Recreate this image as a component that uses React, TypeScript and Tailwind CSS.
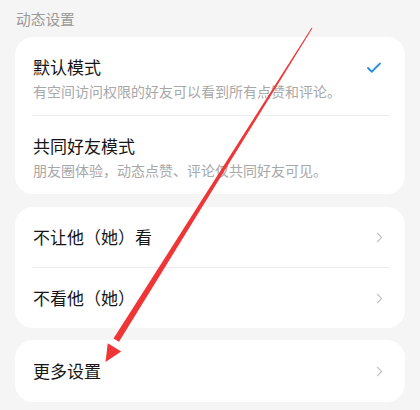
import { Check, ChevronRight } from 'lucide-react';

const font = { fontFamily: '"Noto Sans CJK SC", "Noto Sans", sans-serif' };

const ModeRow = ({ title, desc, checked }: { title: string; desc: string; checked?: boolean }) => (
  <div className="flex items-center pl-[18px] pr-[22px] pt-[18px] pb-[14px]">
    <div className="flex-1">
      <div className="text-[17px] leading-[24px] text-[#161616]">{title}</div>
      <div className="mt-[2px] text-[14px] leading-[20px] text-[#a8a8a8]">{desc}</div>
    </div>
    {checked && <Check className="h-[18px] w-[18px] text-[#2a8ee0] -mt-[20px]" strokeWidth={2.4} />}
  </div>
);

const LinkRow = ({ label, height }: { label: string; height: string }) => (
  <div className={`flex items-center pl-[18px] pr-[17px] ${height}`}>
    <span className="flex-1 text-[17px] leading-[24px] text-[#161616]">{label}</span>
    <ChevronRight className="h-[17px] w-[17px] text-[#c4c4c4]" strokeWidth={1.6} />
  </div>
);

const Divider = () => <div className="ml-[18px] mr-[15px] h-px bg-[#ededed]" />;

export default function App() {
  return (
    <div className="relative h-[410px] w-[420px] overflow-hidden bg-[#f5f5f5] px-[15px] pt-[9px]" style={font}>
      <div className="pl-px text-[14.7px] leading-[20px] text-[#9a9a9a]">动态设置</div>

      <div className="mt-[8px] rounded-[18px] bg-white">
        <ModeRow title="默认模式" desc="有空间访问权限的好友可以看到所有点赞和评论。" checked />
        <Divider />
        <ModeRow title="共同好友模式" desc="朋友圈体验，动态点赞、评论仅共同好友可见。" />
      </div>

      <div className="mt-[13px] rounded-[18px] bg-white">
        <LinkRow label="不让他（她）看" height="h-[60px]" />
        <Divider />
        <LinkRow label="不看他（她）" height="h-[60px]" />
      </div>

      <div className="mt-[12px] rounded-[18px] bg-white">
        <LinkRow label="更多设置" height="h-[62px]" />
      </div>

      {/* red annotation arrow */}
      <svg className="pointer-events-none absolute left-0 top-0" width="420" height="410" viewBox="0 0 420 410">
        <polygon points="312.4,28.2 311.6,27.8 113.5,338.4 119,341.8" fill="#ef3535" />
        <polygon points="105.5,362 107.8,343.2 121.2,351.6" fill="#ef3535" />
      </svg>
    </div>
  );
}
